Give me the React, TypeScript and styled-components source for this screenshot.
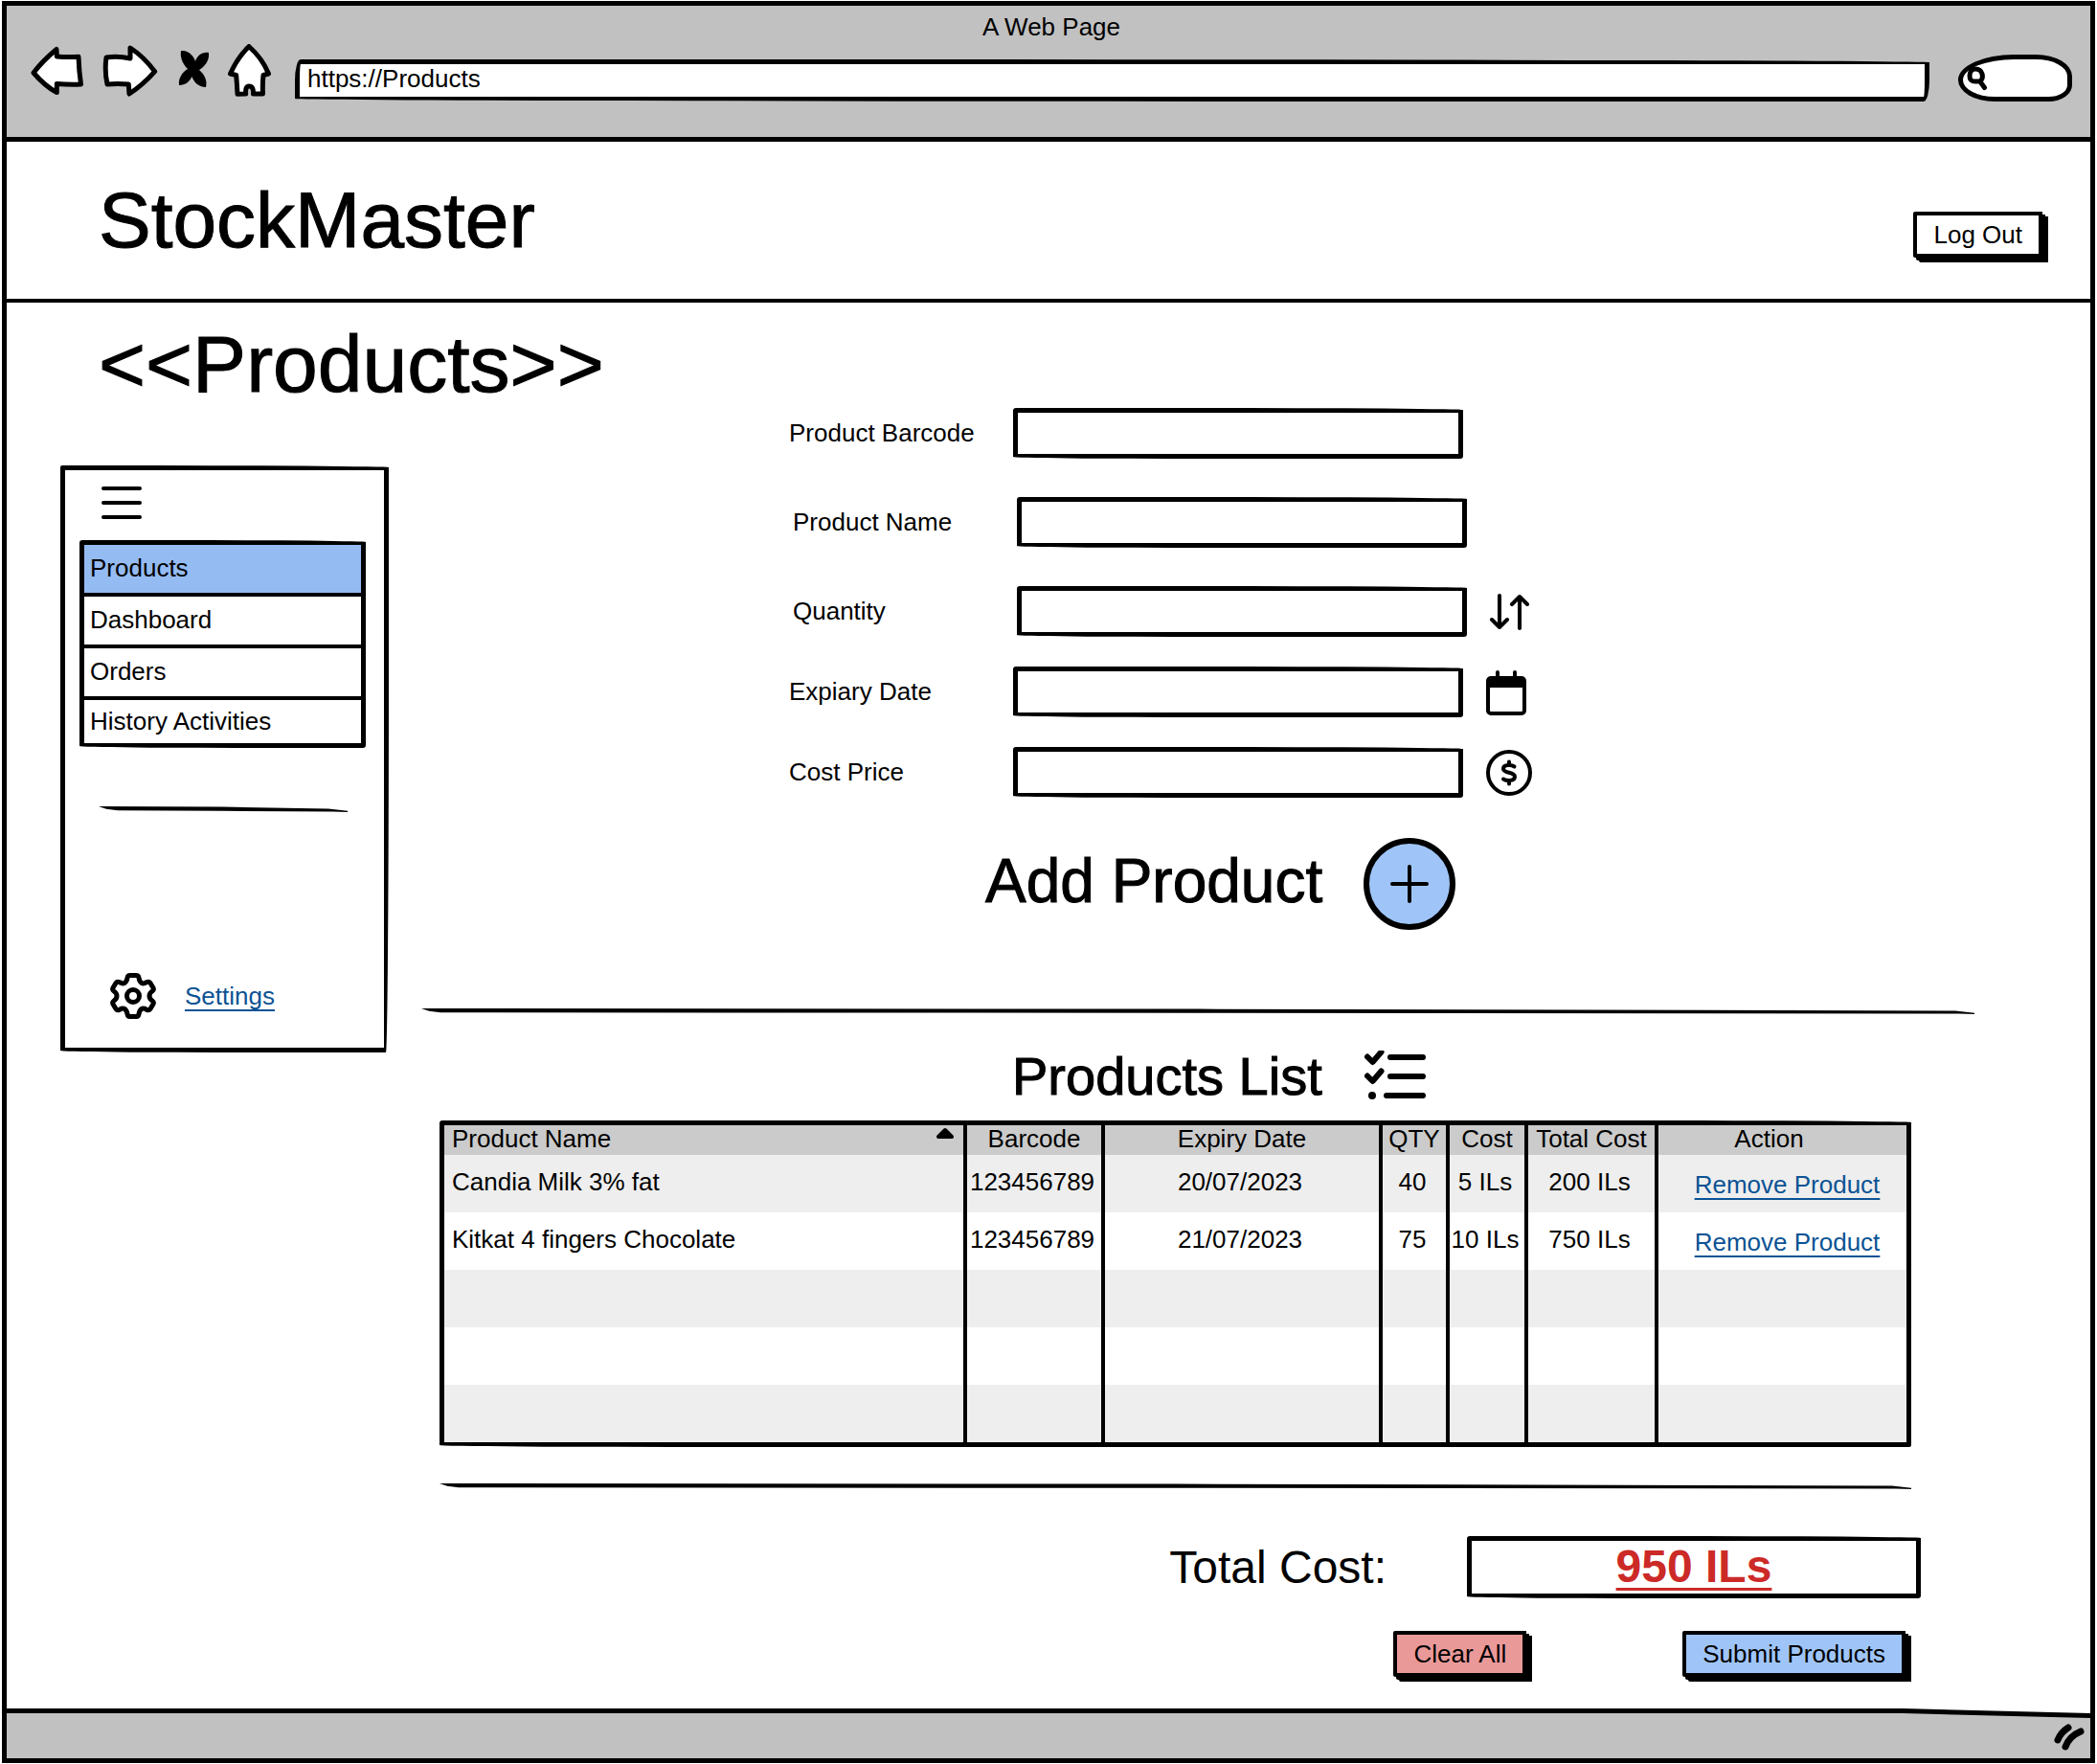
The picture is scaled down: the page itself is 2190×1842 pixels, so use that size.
import React from 'react';
import styled, { createGlobalStyle } from 'styled-components';

const ink = '#000000';
const chrome = '#c1c1c1';
const blue = '#9fc5f8';
const linkBlue = '#0b5394';

const GlobalStyle = createGlobalStyle`
  *, *::before, *::after { box-sizing: border-box; }
  body {
    margin: 0;
    background: #ffffff;
    color: ${ink};
    font: 26px/30px "Liberation Sans", Arial, sans-serif;
  }
  button, input { font: inherit; color: inherit; }
  h1, h2 {
    margin: 0;
    font-weight: 400;
    -webkit-text-stroke: 1px ${ink};
  }
  svg { display: block; flex: none; }
`;

const Window = styled.div`
  display: flex;
  flex-direction: column;
  min-height: calc(100vh - 3px);
  margin: 1px 2px 2px;
  border: 5px solid ${ink};
  background: #ffffff;
`;

/* Browser chrome */

const Toolbar = styled.div`
  padding: 7px 19px 37px 25px;
  border-bottom: 5px solid ${ink};
  background: ${chrome};
`;

const WindowTitle = styled.div`
  text-align: center;
`;

const NavRow = styled.div`
  display: flex;
  align-items: flex-end;
  height: 60px;
  margin-top: 3px;
`;

const NavButtons = styled.div`
  display: flex;
  align-self: flex-start;
  gap: 19px;
  margin-right: 24px;
`;

const IconButton = styled.button`
  display: block;
  padding: 0;
  border: 0;
  background: none;
  cursor: pointer;
`;

const UrlInput = styled.input`
  flex: 1;
  min-width: 0;
  height: 44px;
  margin-right: 30px;
  padding: 0 8px 4px;
  border: 5px solid ${ink};
  border-radius: 6px 1200px 6px 1200px / 22px 3px 22px 3px;
  background: #ffffff;
  outline: none;
`;

const SearchBox = styled.label`
  display: flex;
  align-items: center;
  width: 119px;
  height: 49px;
  padding: 0 10px 0 4px;
  border: 5px solid ${ink};
  border-radius: 62px 40px 26px 40px / 28px 24px 18px 24px;
  background: #ffffff;
`;

const SearchInput = styled.input`
  flex: 1;
  min-width: 0;
  border: 0;
  background: transparent;
  outline: none;
`;

/* Page */

const Header = styled.header`
  display: flex;
  align-items: center;
  justify-content: space-between;
  height: 168px;
  padding: 0 50px 0 96px;
  border-bottom: 4px solid ${ink};
`;

const Brand = styled.h1`
  font-size: 82px;
  line-height: 92px;
`;

const HeaderActions = styled.div`
  padding-top: 30px;
`;

const ShadowButton = styled.button<{ $fill: string }>`
  height: 48px;
  padding: 0 17px;
  border: 4px solid ${ink};
  border-radius: 2px 0 0 2px;
  background: ${(p) => p.$fill};
  box-shadow: 3px 3px 0 ${ink}, 6px 5px 0 ${ink};
  line-height: 30px;
  cursor: pointer;
`;

const Main = styled.main`
  flex: 1;
  padding: 18px 121px 33px 56px;
`;

const PageTitle = styled.h2`
  padding-left: 40px;
  font-size: 84px;
  line-height: 92px;
`;

const Columns = styled.div`
  display: flex;
  align-items: flex-start;
  gap: 34px;
`;

const Sidebar = styled.aside`
  display: flex;
  flex: none;
  flex-direction: column;
  width: 343px;
  height: 613px;
  margin-top: 60px;
  padding: 17px 19px 30px 15px;
  border: 5px solid ${ink};
  border-radius: 2px 300px 3px 200px / 2px 2px 400px 2px;
`;

const MenuToggle = styled(IconButton)`
  align-self: flex-start;
  margin: 0 0 20px 23px;
`;

const Menu = styled.ul`
  margin: 0;
  padding: 0;
  border: 5px solid ${ink};
  border-radius: 3px 200px 3px 200px / 3px 2px 3px 2px;
  list-style: none;
`;

const MenuItem = styled.li`
  & + & { border-top: 4px solid ${ink}; }
`;

const MenuLink = styled.a<{ $active?: boolean }>`
  display: block;
  padding: 9px 6px 11px;
  background: ${(p) => (p.$active ? '#94bbf2' : 'transparent')};
  color: inherit;
  text-decoration: none;

  ${MenuItem}:last-child & { padding: 7px 6px 8px; }
`;

const Rule = styled.hr`
  height: 6px;
  margin: 0;
  border: 0;
  background: ${ink};
  clip-path: polygon(
    0 0, 50% 10%, calc(100% - 20px) 40%, 100% 80%,
    100% 100%, calc(100% - 16px) 90%, 50% 80%, 20px 70%, 8px 45%
  );
`;

const SidebarRule = styled(Rule)`
  margin: 61px 19px 0 20px;
`;

const SettingsRow = styled.div`
  display: flex;
  align-items: center;
  gap: 30px;
  margin: auto 0 0 32px;
`;

const TextLink = styled.a`
  color: ${linkBlue};
  text-decoration: underline;
  text-decoration-thickness: 2px;
  text-underline-offset: 5px;
  text-decoration-skip-ink: none;
`;

const Content = styled.div`
  flex: 1;
  min-width: 0;
`;

const Form = styled.form`
  display: flex;
  flex-direction: column;
  padding-left: 384px;
`;

const Field = styled.div<{ $gap: number; $inset?: boolean }>`
  display: flex;
  align-items: center;
  height: 53px;
  margin-bottom: ${(p) => p.$gap}px;
  padding-left: ${(p) => (p.$inset ? 4 : 0)}px;
`;

const FieldLabel = styled.label`
  width: 234px;
  padding-bottom: 2px;
`;

const TextInput = styled.input`
  width: 470px;
  height: 53px;
  margin-right: 24px;
  padding: 0 10px;
  border: 5px solid ${ink};
  border-radius: 3px 280px 3px 200px / 3px 2px 3px 2px;
  background: #ffffff;
  outline: none;
`;

const AddRow = styled.div`
  display: flex;
  align-items: center;
  gap: 43px;
  margin-top: 2px;
  padding-left: 205px;
`;

const AddTitle = styled.h2`
  padding-bottom: 6px;
  font-size: 64px;
  line-height: 72px;
`;

const AddButton = styled.button`
  display: flex;
  align-items: center;
  justify-content: center;
  width: 96px;
  height: 96px;
  padding: 0;
  border: 6px solid ${ink};
  border-radius: 50%;
  background: ${blue};
  cursor: pointer;
`;

const FormRule = styled(Rule)`
  margin-top: 82px;
`;

const ListHeading = styled.div`
  display: flex;
  align-items: center;
  gap: 43px;
  margin: 33px 0 14px;
  padding-left: 617px;
`;

const ListTitle = styled.h2`
  font-size: 56px;
  line-height: 64px;
`;

const ListSection = styled.section`
  margin: 0 66px 0 19px;
`;

const Table = styled.table`
  width: 100%;
  border: 5px solid ${ink};
  border-radius: 3px 300px 2px 300px / 3px 2px 2px 2px;
  border-spacing: 0;
  table-layout: fixed;
`;

const HeadCell = styled.th<{ $first?: boolean }>`
  height: 31px;
  padding: 0;
  border-left: ${(p) => (p.$first ? 0 : 4)}px solid ${ink};
  background: #cbcbcb;
  font-weight: 400;
  line-height: 28px;
  text-align: center;
  vertical-align: top;
  white-space: nowrap;

  &:last-child { padding-right: 28px; }
`;

const SortHead = styled.div`
  display: flex;
  align-items: flex-start;
  justify-content: space-between;
  padding: 0 9px 0 8px;
`;

const SortButton = styled(IconButton)`
  padding-top: 2px;
`;

const BodyRow = styled.tr`
  &:nth-child(odd) { background: #eeeeee; }
`;

const Cell = styled.td<{ $first?: boolean }>`
  height: 60px;
  padding: ${(p) => (p.$first ? '0 0 4px 8px' : '0 4px 4px 0')};
  border-left: ${(p) => (p.$first ? 0 : 4)}px solid ${ink};
  text-align: ${(p) => (p.$first ? 'left' : 'center')};
  white-space: nowrap;
`;

const ActionCell = styled(Cell)`
  padding: 2px 0 0 10px;
`;

const ListRule = styled(Rule)`
  margin-top: 38px;
`;

const TotalRow = styled.div`
  display: flex;
  align-items: center;
  justify-content: flex-end;
  gap: 84px;
  margin: 49px 56px 34px 0;
`;

const TotalLabel = styled.label`
  font-size: 48px;
  line-height: 56px;
`;

const TotalValue = styled.output`
  width: 474px;
  height: 65px;
  border: 5px solid ${ink};
  border-radius: 3px 280px 3px 200px / 3px 2px 3px 2px;
  color: #cc2a27;
  font-size: 48px;
  font-weight: 700;
  line-height: 54px;
  text-align: center;
  text-decoration: underline;
  text-decoration-thickness: 3px;
  text-underline-offset: 6px;
`;

const Actions = styled.div`
  display: flex;
  justify-content: flex-end;
  gap: 163px;
  margin-right: 72px;
`;

/* Status bar: the top stroke sags towards the right edge */

const StatusBar = styled.footer`
  padding-top: 5px;
  background: ${ink};
  clip-path: polygon(0 0, 91% 0, 100% 5px, 100% 100%, 0 100%);
`;

const StatusFill = styled.div`
  display: flex;
  align-items: center;
  justify-content: flex-end;
  height: 47px;
  padding: 2px 4px 0;
  background: ${chrome};
  clip-path: polygon(0 0, 91% 0, 100% 5px, 100% 100%, 0 100%);
`;

const outline = { fill: '#ffffff', stroke: ink, strokeWidth: 5, strokeLinejoin: 'round' as const };
const line = {
  fill: 'none',
  stroke: ink,
  strokeLinecap: 'round' as const,
  strokeLinejoin: 'round' as const,
};

const BackIcon = () => (
  <svg width="56" height="54" viewBox="0 -1 56 54" {...outline}>
    <path d="M3 28Q13 15 27 3.5L27.3 11Q38 12 50 11.3Q50.500 26 52.500 40Q40 40.500 27.300 39.500L27.300 48.500Q15 42 3 28Z" />
  </svg>
);

const ForwardIcon = () => (
  <svg width="59" height="54" viewBox="0 0 59 54" {...outline}>
    <path d="M4 13Q16 11 29 14L29 3Q43 12 54.700 27.700Q42 42 28 51L27.300 41Q16 40 5 41Q2 27 4 13Z" />
  </svg>
);

const StopIcon = () => (
  <svg width="34" height="54" viewBox="0 -4 34 54">
    <path
      fill={ink}
      d="M4 2C13 1 18 9 19 13C21 7 26 3 33 4C34 13 28 19 23 22C28 26 32 33 30 40C22 40 17 34 15.500 29C13 34 9 38 2 38C1 30 6 24 11 21C5 15 3 8 4 2Z"
    />
  </svg>
);

const HomeIcon = () => (
  <svg width="46" height="55" viewBox="0 0 46 55" {...outline} strokeWidth={5}>
    <path d="M22 2.500Q36 15 42.500 31L37 32.500Q36 42 36.500 52L26.500 52Q27 44 22 44Q18 44 18.700 52L10 52.300Q9.500 42 8.700 32.500L2.500 31Q10 14 22 2.500Z" />
  </svg>
);

const SearchIcon = () => (
  <svg width="22" height="26" viewBox="0 0 22 26" {...line} strokeWidth={5}>
    <path d="M9 3C5 3 3 6 3 10C3 15 5 16 9 16H14C16 14 17 11 16 8C15 5 13 3 9 3ZM14.500 17L18.500 22.500" />
  </svg>
);

const MenuIcon = () => (
  <svg width="42" height="36" viewBox="0 0 42 36" {...line} strokeWidth={4}>
    <path d="M2 2H40M2 17H40M2 32H40" />
  </svg>
);

const GearIcon = () => (
  <svg width="48" height="48" viewBox="0 0 48 48" {...line} strokeWidth={5}>
    <path d="M20.500 2.500H27.500Q29.500 2.500 30 5Q30.500 9 33 10.500Q35 11.500 38 9.800Q40.500 8.500 42 10.500L45 15.500Q46 17.500 44 19Q41 21 41 24Q41 27 44 29Q46 30.500 45 32.500L42 37.500Q40.500 39.500 38 38.200Q35 36.500 33 37.500Q30.500 39 30 43Q29.500 45.500 27.500 45.500H20.500Q18.500 45.500 18 43Q17.500 39 15 37.500Q13 36.500 10 38.200Q7.500 39.500 6 37.500L3 32.500Q2 30.500 4 29Q7 27 7 24Q7 21 4 19Q2 17.500 3 15.500L6 10.500Q7.500 8.500 10 9.800Q13 11.500 15 10.500Q17.500 9 18 5Q18.500 2.500 20.500 2.500Z" />
    <circle cx="24" cy="24" r="6.500" />
  </svg>
);

const SortArrowsIcon = () => (
  <svg width="42" height="38" viewBox="0 0 42 38" {...line} strokeWidth={4}>
    <path d="M10 2V35M2 27L10 35L18 27M31 36V3M23 11L31 3L39 11" />
  </svg>
);

const CalendarIcon = () => (
  <svg width="42" height="48" viewBox="0 -1 42 48" {...line} strokeWidth={4}>
    <rect x="2" y="8" width="38" height="37" rx="3" />
    <path d="M2 17V11Q2 8 5 8H37Q40 8 40 11V17Z" fill={ink} strokeWidth={2} />
    <path d="M12 2V9M30 2V9" />
  </svg>
);

const DollarIcon = () => (
  <svg width="48" height="48" viewBox="0 0 48 48" {...line} strokeWidth={4}>
    <circle cx="24" cy="24" r="22" />
    <path d="M29.500 17.500C26 15 18 15.500 18 19.700C18 25 30 22.500 30 28C30 32.500 22 33 18 30.500M24 12.500V16M24 32V35.500" />
  </svg>
);

const PlusIcon = () => (
  <svg width="40" height="40" viewBox="0 0 40 40" {...line} strokeWidth={4}>
    <path d="M20 2V38M2 20H38" />
  </svg>
);

const ChecklistIcon = () => (
  <svg width="66" height="54" viewBox="0 2 66 54" {...line} strokeWidth={6}>
    <path d="M4 8.500L9.500 14L18.500 3.500M4 28.500L9.500 34L18.500 23.500M28 9H62M28 29H62M24 49H62" overflow="visible" />
    <circle cx="9" cy="49" r="4" fill={ink} stroke="none" />
  </svg>
);

const SortMarker = () => (
  <svg width="20" height="13" viewBox="0 0 20 13">
    <path d="M3 10L10 3L17 10Z" fill={ink} stroke={ink} strokeWidth="4" strokeLinejoin="round" />
  </svg>
);

const ResizeGrip = () => (
  <svg width="34" height="28" viewBox="0 0 34 28" {...line}>
    <path d="M4 17Q7 9 15 4" strokeWidth={7} />
    <path d="M12 24Q16 13 28 8" strokeWidth={7} />
  </svg>
);

const menu = ['Products', 'Dashboard', 'Orders', 'History Activities'];

const fields = [
  { id: 'barcode', label: 'Product Barcode', gap: 40 },
  { id: 'name', label: 'Product Name', gap: 40, inset: true },
  { id: 'quantity', label: 'Quantity', gap: 31, inset: true, icon: <SortArrowsIcon /> },
  { id: 'expiry', label: 'Expiary Date', gap: 31, icon: <CalendarIcon /> },
  { id: 'cost', label: 'Cost Price', gap: 40, icon: <DollarIcon /> },
];

const columns = [
  { title: 'Product Name' },
  { title: 'Barcode', width: 144 },
  { title: 'Expiry Date', width: 290 },
  { title: 'QTY', width: 70 },
  { title: 'Cost', width: 82 },
  { title: 'Total Cost', width: 136 },
  { title: 'Action', width: 263 },
];

const products = [
  ['Candia Milk 3% fat', '123456789', '20/07/2023', '40', '5 ILs', '200 ILs'],
  ['Kitkat 4 fingers Chocolate', '123456789', '21/07/2023', '75', '10 ILs', '750 ILs'],
];

const blankRows = [0, 1, 2];

export default function App() {
  return (
    <>
      <GlobalStyle />
      <Window>
        <Toolbar>
          <WindowTitle>A Web Page</WindowTitle>
          <NavRow>
            <NavButtons>
              <IconButton aria-label="Back"><BackIcon /></IconButton>
              <IconButton aria-label="Forward"><ForwardIcon /></IconButton>
              <IconButton aria-label="Stop"><StopIcon /></IconButton>
              <IconButton aria-label="Home"><HomeIcon /></IconButton>
            </NavButtons>
            <UrlInput aria-label="Address" defaultValue="https://Products" />
            <SearchBox>
              <SearchIcon />
              <SearchInput aria-label="Search" type="text" />
            </SearchBox>
          </NavRow>
        </Toolbar>

        <Header>
          <Brand>StockMaster</Brand>
          <HeaderActions>
            <ShadowButton $fill="#ffffff">Log Out</ShadowButton>
          </HeaderActions>
        </Header>

        <Main>
          <PageTitle>{'<<Products>>'}</PageTitle>
          <Columns>
            <Sidebar>
              <MenuToggle aria-label="Menu"><MenuIcon /></MenuToggle>
              <nav>
                <Menu>
                  {menu.map((item, i) => (
                    <MenuItem key={item}>
                      <MenuLink href="#" $active={i === 0}>{item}</MenuLink>
                    </MenuItem>
                  ))}
                </Menu>
              </nav>
              <SidebarRule />
              <SettingsRow>
                <GearIcon />
                <TextLink href="#">Settings</TextLink>
              </SettingsRow>
            </Sidebar>

            <Content>
              <Form onSubmit={(e) => e.preventDefault()}>
                {fields.map((f) => (
                  <Field key={f.id} $gap={f.gap} $inset={f.inset}>
                    <FieldLabel htmlFor={f.id}>{f.label}</FieldLabel>
                    <TextInput id={f.id} type="text" />
                    {f.icon}
                  </Field>
                ))}
                <AddRow>
                  <AddTitle>Add Product</AddTitle>
                  <AddButton aria-label="Add product"><PlusIcon /></AddButton>
                </AddRow>
              </Form>

              <FormRule />

              <ListHeading>
                <ListTitle>Products List</ListTitle>
                <ChecklistIcon />
              </ListHeading>

              <ListSection>
                <Table>
                  <colgroup>
                    {columns.map((c) => <col key={c.title} width={c.width} />)}
                  </colgroup>
                  <thead>
                    <tr>
                      {columns.map((c, i) => (
                        <HeadCell key={c.title} scope="col" $first={i === 0}>
                          {i === 0 ? (
                            <SortHead>
                              {c.title}
                              <SortButton aria-label="Sort by name"><SortMarker /></SortButton>
                            </SortHead>
                          ) : c.title}
                        </HeadCell>
                      ))}
                    </tr>
                  </thead>
                  <tbody>
                    {products.map((row) => (
                      <BodyRow key={row[0]}>
                        {row.map((value, i) => <Cell key={i} $first={i === 0}>{value}</Cell>)}
                        <ActionCell><TextLink href="#">Remove Product</TextLink></ActionCell>
                      </BodyRow>
                    ))}
                    {blankRows.map((n) => (
                      <BodyRow key={n}>
                        {columns.map((c, i) => <Cell key={c.title} $first={i === 0} />)}
                      </BodyRow>
                    ))}
                  </tbody>
                </Table>
                <ListRule />
              </ListSection>

              <TotalRow>
                <TotalLabel htmlFor="total">Total Cost:</TotalLabel>
                <TotalValue id="total">950 ILs</TotalValue>
              </TotalRow>
              <Actions>
                <ShadowButton $fill="#ea9999">Clear All</ShadowButton>
                <ShadowButton $fill={blue}>Submit Products</ShadowButton>
              </Actions>
            </Content>
          </Columns>
        </Main>

        <StatusBar>
          <StatusFill><ResizeGrip /></StatusFill>
        </StatusBar>
      </Window>
    </>
  );
}
